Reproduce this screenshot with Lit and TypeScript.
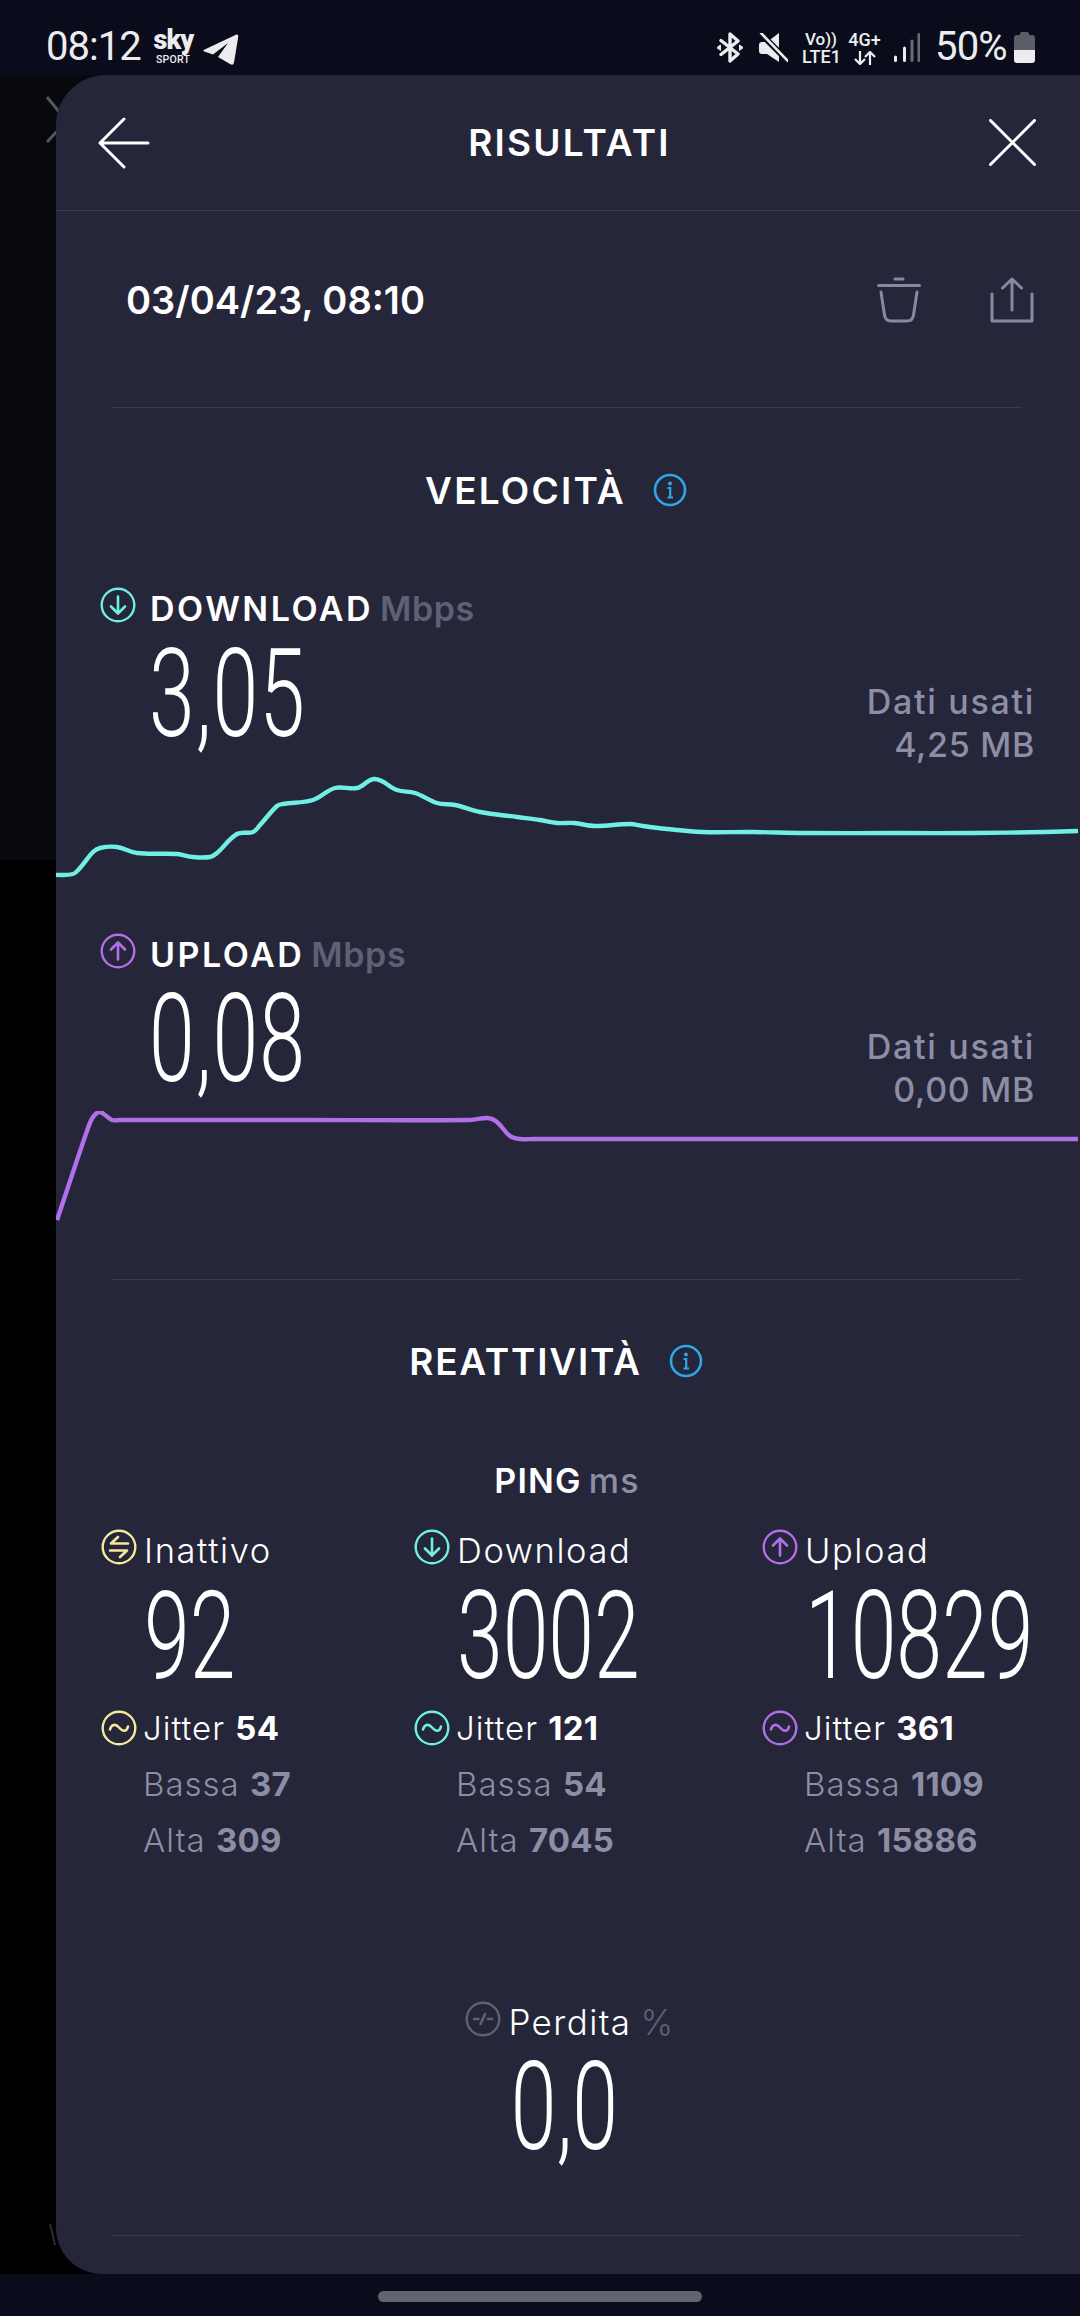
import { LitElement, html, css } from "lit";
import { customElement } from "lit/decorators.js";

const CYAN = "#6fefe5";
const PURPLE = "#b26fe8";
const YELLOW = "#f6e89c";
const MUTED = "#5f6074";

const DOWN: number[][] = [[54,875],[73,874],[80,868],[93,852],[100,848],[117,847],[137,853],[177,854],[193,857],[210,857],[217,853],[237,834],[253,832],[260,825],[277,806],[283,804],[313,800],[335,788],[357,788],[375,779],[397,790],[415,793],[437,803],[455,805],[480,812],[517,817],[540,820],[557,823],[574,823],[595,826],[630,824],[643,826],[667,829],[702,832],[753,832],[805,833],[898,833],[974,833],[1043,832],[1078,831]];
const UP: number[][] = [[57,1220],[88,1128],[93,1117],[99,1112],[105,1115],[112,1120],[120,1120],[300,1120],[470,1120],[488,1118],[497,1122],[510,1136],[520,1139],[535,1139],[700,1139],[900,1139],[1078,1139]];

function smooth(p: number[][]): string {
  let d = `M${p[0][0]} ${p[0][1]}`;
  const tan = (i: number) => {
    const a = p[Math.max(i - 1, 0)], c = p[Math.min(i + 1, p.length - 1)];
    const l = Math.hypot(c[0] - a[0], c[1] - a[1]) || 1;
    return [(c[0] - a[0]) / l, (c[1] - a[1]) / l];
  };
  for (let i = 0; i < p.length - 1; i++) {
    const b = p[i], c = p[i + 1];
    const s = Math.hypot(c[0] - b[0], c[1] - b[1]) * 0.36;
    const t0 = tan(i), t1 = tan(i + 1);
    d += ` C${(b[0] + t0[0] * s).toFixed(1)} ${(b[1] + t0[1] * s).toFixed(1)} ${(c[0] - t1[0] * s).toFixed(1)} ${(c[1] - t1[1] * s).toFixed(1)} ${c[0]} ${c[1]}`;
  }
  return d;
}

function circleIcon(kind: string, color: string) {
  const glyph: Record<string, string> = {
    down: "M18 9.5V26M11 19.5L18 26.5L25 19.5",
    up: "M18 26.5V10M11 16.5L18 9.5L25 16.5",
    wave: "M9 19.5C10.5 14 14.5 13.5 18 17.5S25.5 22.5 27 16.5",
    idle: "M27 14.5H10L17 8M9 21.5H26L19 28",
    loss: "M9 18H13.5M15.5 23L20 13M23 18H27",
  };
  return html`<svg class="ci" viewBox="0 0 36 36" fill="none" stroke=${color} stroke-linecap="round" stroke-linejoin="round">
    <circle cx="18" cy="18" r="16.3" stroke-width="2.4"></circle>
    <path d=${glyph[kind]} stroke-width="2.6"></path>
  </svg>`;
}

const info = html`<svg class="info" viewBox="0 0 34 34" fill="none">
  <circle cx="17" cy="17" r="15" stroke="#2ea8e5" stroke-width="2.6"></circle>
  <circle cx="17" cy="10.5" r="1.9" fill="#2ea8e5"></circle>
  <path d="M14.5 15H17.2V24M14.5 24.5H20" stroke="#2ea8e5" stroke-width="2.2"></path>
</svg>`;

@customElement("app-root")
export class AppRoot extends LitElement {
  static styles = css`
    :host { display: flex; flex-direction: column; width: 1080px; height: 2316px; background: #0a0c1b; font-family: Inter, "Liberation Sans", sans-serif; color: #fff; overflow: hidden; }
    .status { height: 75px; flex: none; display: flex; align-items: flex-start; padding: 0 45px 0 46px; color: #ececef; font-family: Roboto, sans-serif; box-sizing: border-box; }
    .time { font-size: 40px; line-height: 47px; margin-top: 23px; letter-spacing: -1px; }
    .sky { width: 39px; margin-left: 13px; margin-top: 28px; text-align: center; font-weight: 700; }
    .sky b { display: block; font-size: 27px; line-height: 24px; letter-spacing: -1px; }
    .sky i { display: block; font-style: normal; font-size: 10.5px; line-height: 12px; font-weight: 500; letter-spacing: .3px; margin-top: 2px; }
    .tg { width: 36px; height: 32px; margin: 34px 0 0 10px; }
    .spacer { flex: 1; }
    .bt { width: 26px; height: 31px; margin-top: 32px; }
    .mute { width: 29px; height: 29px; margin: 33px 0 0 16px; }
    .net { text-align: center; font-weight: 500; margin-top: 31px; white-space: nowrap; }
    .net span { display: block; line-height: 17px; font-size: 17px; }
    .net.vo { width: 38px; margin-left: 14px; }
    .net.vo span + span { font-size: 18px; line-height: 17px; }
    .net.g { width: 33px; margin-left: 8px; }
    .net.g span { font-size: 18px; }
    .net svg { display: block; width: 24px; height: 14px; margin: 3px auto 0; }
    .sig { width: 26px; height: 29px; margin: 33px 0 0 13px; }
    .pct { font-size: 40px; line-height: 47px; margin: 23px 0 0 15px; width: 71px; letter-spacing: -.8px; white-space: nowrap; }
    .bat { width: 21px; height: 31px; margin: 32px 0 0 8px; }

    .main { flex: 1; display: flex; min-height: 0; position: relative; background: linear-gradient(#08090d 0 785px, #000 785px); }
    .gutter { width: 56px; flex: none; }
    .ghost { position: absolute; left: 44px; top: 20px; width: 16px; height: 50px; }
    .ghost2 { position: absolute; left: 48px; top: 2148px; width: 14px; height: 24px; }
    .panel { flex: 1; position: relative; background: #25263a; border-radius: 50px 0 0 46px; display: flex; flex-direction: column; }
    .head { height: 135px; flex: none; border-bottom: 1px solid #3a3b4e; display: flex; align-items: center; justify-content: space-between; padding: 0 44px 0 42px; }
    .head h1 { margin: 0; font-size: 37px; line-height: 44px; font-weight: 600; letter-spacing: 2.2px; }
    .back { width: 52px; height: 52px; }
    .close { width: 47px; height: 47px; }
    .daterow { height: 196px; box-sizing: border-box; flex: none; display: flex; align-items: center; padding: 0 46px 18px 70px; }
    .date { font-size: 38px; line-height: 44px; font-weight: 600; flex: 1; letter-spacing: 0; }
    .trash { width: 44px; height: 46px; }
    .share { width: 44px; height: 46px; margin-left: 69px; }
    .rule { height: 1px; background: #3a3b4e; margin: 0 58px 0 55px; flex: none; }
    .rule.end { margin-top: 77px; }
    .sect { display: flex; justify-content: center; align-items: center; gap: 27px; height: 40px; padding-right: 24px; font-size: 37px; font-weight: 600; letter-spacing: 2.2px; flex: none; }
    .sect.first { margin-top: 62px; }
    .sect.second { margin-top: 61px; letter-spacing: 1.8px; }
    .info { width: 34px; height: 34px; }
    .mhead { display: flex; align-items: center; height: 36px; padding-left: 44px; flex: none; font-size: 34px; font-weight: 600; letter-spacing: 2.5px; white-space: nowrap; }
    .mhead.first { margin-top: 77px; }
    .ci { width: 36px; height: 36px; flex: none; }
    .mhead .ci { margin-right: 14px; }
    .mhead span, .mhead em, .row .lbl, .loss span, .loss em { margin-top: 6px; }
    .mhead em { font-style: normal; color: #5f6074; margin-left: 7px; letter-spacing: .6px; }
    .mval { display: flex; justify-content: space-between; padding: 0 45px 0 93px; flex: none; margin-top: 21px; }
    .mval.first { margin-top: 22px; }
    .mval .num { letter-spacing: 1.5px; }
    .numbox { width: 200px; }
    .num { font-family: Roboto, sans-serif; font-weight: 300; font-size: 122px; line-height: 100px; height: 100px; letter-spacing: 0; transform: scaleX(.675); transform-origin: left top; white-space: nowrap; display: block; }
    .used { text-align: right; font-size: 34px; line-height: 43px; font-weight: 500; color: #8d8ea5; margin-top: 35px; white-space: nowrap; }
    .used span { display: block; letter-spacing: .7px; }
    .used span:first-child { letter-spacing: 1.7px; }
    .chart { display: block; flex: none; width: 1024px; }
    .ping { display: flex; justify-content: center; align-items: center; height: 40px; flex: none; margin-top: 79px; font-size: 34px; font-weight: 600; letter-spacing: 1.2px; gap: 7px; padding-right: 2px; }
    .ping em { font-style: normal; color: #8d8ea5; font-weight: 500; }
    .cols { display: grid; grid-template-columns: 313px 348px 1fr; padding-left: 45px; flex: none; margin-top: 29px; }
    .col { min-width: 0; font-size: 33px; font-weight: 300; white-space: nowrap; }
    .row { display: flex; align-items: center; height: 36px; gap: 6px; letter-spacing: 1px; }
    .row .lbl { font-size: 34.5px; letter-spacing: 1.6px; margin-left: 1px; }
    .row b { font-weight: 700; letter-spacing: .2px; }
    .col .num { margin: 22px 0 23px 43px; }
    .sub { margin-top: 10px; padding-left: 42px; color: #8d8ea5; line-height: 56px; letter-spacing: 1px; }
    .sub b { font-weight: 700; letter-spacing: .2px; }
    .sub div { height: 56px; }
    .loss { display: flex; justify-content: center; align-items: center; height: 36px; margin-top: 133px; font-size: 35px; font-weight: 300; gap: 7px; padding-left: 4px; flex: none; letter-spacing: 1.4px; }
    .loss em { font-style: normal; color: #5f6074; margin-left: 2px; }
    .lossnum { display: flex; justify-content: center; margin-top: 21px; flex: none; height: 100px; padding-right: 7px; }
    .lossnum .num { transform-origin: center top; }
    .homearea { height: 42px; flex: none; display: flex; justify-content: center; padding: 17px 0 0; box-sizing: border-box; }
    .home { width: 324px; height: 11px; border-radius: 6px; background: #63636f; }
  `;

  private col(kind: string, color: string, label: string, val: string, j: string, lo: string, hi: string) {
    return html`<div class="col">
      <div class="row">${circleIcon(kind, color)}<span class="lbl">${label}</span></div>
      <div class="num">${val}</div>
      <div class="row">${circleIcon("wave", color)}<span>Jitter <b>${j}</b></span></div>
      <div class="sub"><div>Bassa <b>${lo}</b></div><div>Alta <b>${hi}</b></div></div>
    </div>`;
  }

  render() {
    return html`
      <div class="status">
        <span class="time">08:12</span>
        <div class="sky"><b>sky</b><i>SPORT</i></div>
        <svg class="tg" viewBox="0 0 36 32" fill="#ececef"><path d="M.6 16L33 .7Q35.6 0 35.2 3L31 28.5Q30.4 32 27 30L15 23L25 9L10 20.5L1.2 17.6Q0 17 .6 16Z"></path></svg>
        <div class="spacer"></div>
        <svg class="bt" viewBox="0 0 26 31" fill="none" stroke="#ececef" stroke-width="3.4" stroke-linejoin="round" stroke-linecap="round"><path d="M4 8.5L21 22L13 29V2L21 9L4 22.5"></path><path d="M0 15.5L3.5 13V18ZM26 15.5L22.5 13V18Z" fill="#ececef" stroke-width="1"></path></svg>
        <svg class="mute" viewBox="0 0 29 29"><path d="M0 12Q0 9 3 9H8L20 0V29L8 21H3Q0 21 0 18Z" fill="#ececef"></path><path d="M1 0L29 28" stroke="#0a0c1b" stroke-width="6"></path><path d="M2 0L29 28" stroke="#ececef" stroke-width="2.6" stroke-linecap="round"></path></svg>
        <div class="net vo"><span>Vo))</span><span>LTE1</span></div>
        <div class="net g"><span>4G+</span><svg viewBox="0 0 24 14" fill="none" stroke="#ececef" stroke-width="2.2"><path d="M7 0V13M2 8L7 13L12 8M17 14V1M12 6L17 1L22 6"></path></svg></div>
        <svg class="sig" viewBox="0 0 26 29" stroke-width="3" stroke-linecap="round"><path d="M1.5 24V27.5M10.5 15V27.5" stroke="#ececef"></path><path d="M18 8V27.5M25 1.5V27.5" stroke="#6a6a76"></path></svg>
        <span class="pct">50%</span>
        <svg class="bat" viewBox="0 0 21 31"><path d="M6 3V2Q6 0 8 0H13Q15 0 15 2V3H18Q21 3 21 6V18H0V6Q0 3 3 3Z" fill="#5d5d68"></path><path d="M0 18H21V28Q21 31 18 31H3Q0 31 0 28Z" fill="#ececef"></path></svg>
      </div>

      <div class="main">
        <svg class="ghost" viewBox="0 0 16 50" fill="none" stroke="#55565c" stroke-width="3"><path d="M3 2L16 18M3 47L16 33"></path></svg>
        <svg class="ghost2" viewBox="0 0 14 24" fill="none" stroke="#2c2c30" stroke-width="2"><path d="M2 1L7 22"></path></svg>
        <div class="gutter"></div>
        <div class="panel">
          <div class="head">
            <svg class="back" viewBox="0 0 52 52" fill="none" stroke="#fff" stroke-width="3" stroke-linecap="round" stroke-linejoin="round"><path d="M50 26H2M26 2L2 26L26 50"></path></svg>
            <h1>RISULTATI</h1>
            <svg class="close" viewBox="0 0 47 47" fill="none" stroke="#fff" stroke-width="3" stroke-linecap="round"><path d="M1.5 1.5L45.5 45.5M45.5 1.5L1.5 45.5"></path></svg>
          </div>
          <div class="daterow">
            <div class="date">03/04/23, 08:10</div>
            <svg class="trash" viewBox="0 0 44 46" fill="none" stroke="#8889a0" stroke-width="3" stroke-linecap="round"><path d="M1.5 8.5H42.5M18 2H26M4 15L7.5 38Q8.3 44 14 44H30Q35.7 44 36.5 38L40 15"></path></svg>
            <svg class="share" viewBox="0 0 44 46" fill="none" stroke="#8889a0" stroke-width="3" stroke-linecap="round" stroke-linejoin="round"><path d="M2 17V44H42V17M22 33V2M12.5 11L22 2L31.5 11"></path></svg>
          </div>
          <div class="rule"></div>

          <div class="sect first"><span>VELOCITÀ</span>${info}</div>

          <div class="mhead first">${circleIcon("down", CYAN)}<span>DOWNLOAD</span><em>Mbps</em></div>
          <div class="mval first"><div class="numbox"><div class="num">3,05</div></div><div class="used"><span>Dati usati</span><span>4,25 MB</span></div></div>
          <svg class="chart" height="167" viewBox="56 766 1024 167" fill="none"><path d=${smooth(DOWN)} stroke=${CYAN} stroke-width="4.4" stroke-linejoin="round"></path></svg>

          <div class="mhead">${circleIcon("up", PURPLE)}<span>UPLOAD</span><em>Mbps</em></div>
          <div class="mval"><div class="numbox"><div class="num">0,08</div></div><div class="used"><span>Dati usati</span><span>0,00 MB</span></div></div>
          <svg class="chart" height="168" viewBox="56 1111 1024 168" fill="none"><path d=${smooth(UP)} stroke=${PURPLE} stroke-width="4.4" stroke-linejoin="round"></path></svg>

          <div class="rule"></div>
          <div class="sect second"><span>REATTIVITÀ</span>${info}</div>
          <div class="ping"><span>PING</span><em>ms</em></div>
          <div class="cols">
            ${this.col("idle", YELLOW, "Inattivo", "92", "54", "37", "309")}
            ${this.col("down", CYAN, "Download", "3002", "121", "54", "7045")}
            ${this.col("up", PURPLE, "Upload", "10829", "361", "1109", "15886")}
          </div>
          <div class="loss">${circleIcon("loss", MUTED)}<span>Perdita</span><em>%</em></div>
          <div class="lossnum"><div class="num">0,0</div></div>
          <div class="rule end"></div>
        </div>
      </div>
      <div class="homearea"><div class="home"></div></div>
    `;
  }
}
